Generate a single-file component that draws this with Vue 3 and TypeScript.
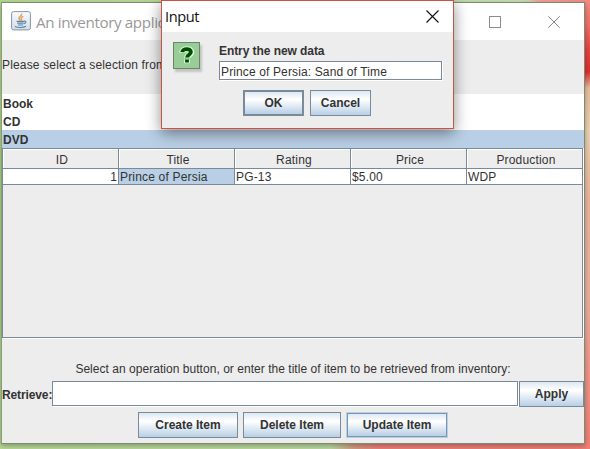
<script setup lang="ts">
import { ref } from 'vue'

interface Item {
  id: number
  title: string
  rating: string
  price: string
  production: string
}

const categories: string[] = ['Book', 'CD', 'DVD']
const selected = ref('DVD')
const columns: string[] = ['ID', 'Title', 'Rating', 'Price', 'Production']
const items = ref<Item[]>([
  { id: 1, title: 'Prince of Persia', rating: 'PG-13', price: '$5.00', production: 'WDP' },
])
const retrieve = ref('')
const entry = ref('Prince of Persia: Sand of Time')
</script>

<template>
  <div class="desktop">
    <main class="window">
      <header class="titlebar">
        <svg class="java" width="20" height="20" viewBox="0 0 20 20">
          <defs>
            <linearGradient id="tile" x1="0" y1="0" x2="0" y2="1">
              <stop offset="0" stop-color="#fafbfc" />
              <stop offset="1" stop-color="#d3dde6" />
            </linearGradient>
          </defs>
          <rect x=".6" y=".6" width="18.8" height="18.3" rx="2" fill="url(#tile)" stroke="#8296a8" />
          <path d="M10.6 2.6c1 2-3.2 3-2.6 4.8.2.9 1.1 1.3 1.2 2.1M12.3 5.4c-2.2 1-2.6 1.8-1.8 2.7.4.5.1 1-.3 1.5" fill="none" stroke="#e59a5c" stroke-width="1.4" />
          <path d="M5.6 10.4h7.6M6.2 12.2h6.4M7 14h5" fill="none" stroke="#5c84a6" stroke-width="1.2" />
          <path d="M13 10.2c2.6-.6 2.6 2-.4 2.8M4 15.5c2.5 1.4 8.8 1.2 11-.3" fill="none" stroke="#5c84a6" stroke-width="1.1" />
        </svg>
        <span class="caption">An inventory applic</span>
        <div class="controls">
          <svg width="12" height="12" viewBox="0 0 12 12"><rect x=".5" y=".5" width="11" height="11" fill="none" stroke="#8c8c8c" /></svg>
          <svg width="12" height="12" viewBox="0 0 12 12"><path d="M.3.3l11.4 11.4M11.7.3L.3 11.7" stroke="#858585" fill="none" /></svg>
        </div>
      </header>
      <section class="prompt"><span>Please select a selection from</span></section>
      <ul class="list">
        <li v-for="c in categories" :key="c" :class="{ active: c === selected }" @click="selected = c">{{ c }}</li>
      </ul>
      <section class="scroll">
        <div class="row head">
          <div v-for="c in columns" :key="c" class="cell">{{ c }}</div>
        </div>
        <div v-for="i in items" :key="i.id" class="row">
          <div class="cell num">{{ i.id }}</div>
          <div class="cell picked">{{ i.title }}</div>
          <div class="cell">{{ i.rating }}</div>
          <div class="cell">{{ i.price }}</div>
          <div class="cell">{{ i.production }}</div>
        </div>
      </section>
      <section class="bottom">
        <p class="hint"><span>Select an operation button, or enter the title of item to be retrieved from inventory:</span></p>
        <div class="retrieve">
          <label for="retrieve">Retrieve:</label>
          <input id="retrieve" v-model="retrieve" class="field" type="text" />
          <button class="btn apply">Apply</button>
        </div>
        <div class="actions">
          <button class="btn create">Create Item</button>
          <button class="btn delete">Delete Item</button>
          <button class="btn update">Update Item</button>
        </div>
      </section>
    </main>

    <div class="dialog" role="dialog">
      <header class="dialog-title">
        <span>Input</span>
        <svg width="13" height="13" viewBox="0 0 13 13"><path d="M.5.5l12 12M12.5.5l-12 12" stroke="#111" stroke-width="1.1" fill="none" /></svg>
      </header>
      <div class="dialog-body">
        <div class="question">
          <svg width="25" height="25" viewBox="0 0 25 25">
            <g fill="none">
              <path d="M8.2 9.8c0-5 9.4-4.6 9.1-.2-.2 2.5-4.2 2.5-4.2 5.2M13 16.6v3.6" stroke="#ceffce" stroke-width="6" />
              <path d="M8.2 9.2c.2-4.3 9-4 8.7 0-.2 2.5-3.9 2.6-3.9 5.2M13 16.6v3" stroke="#064a06" stroke-width="3.8" />
            </g>
          </svg>
        </div>
        <div class="entry">
          <label for="entry">Entry the new data</label>
          <input id="entry" v-model="entry" class="field" type="text" />
        </div>
      </div>
      <div class="dialog-actions">
        <button class="btn ok">OK</button>
        <button class="btn cancel">Cancel</button>
      </div>
    </div>
  </div>
</template>

<style>
body {
  margin: 0;
  overflow: hidden;
}
</style>

<style scoped>
* {
  box-sizing: border-box;
}
.desktop {
  position: relative;
  width: 590px;
  height: 449px;
  padding: 2px 0 0 1px;
  overflow: hidden;
  font: 12px/14px 'Liberation Sans', Arial, sans-serif;
  color: #333;
  background:
    linear-gradient(180deg, #f08c84 0, #ee7168 25px, #e5423d 50px, #dc2f2e 72px, #e5bc9c 88px, #ead0ae 130px, #e9b49a 200px, #e8b09c 300px, #ee9588 370px, #f07e74 449px) right top / 6px 449px no-repeat,
    linear-gradient(90deg, #b9da96 0, #bddba0 330px, #d49a80 355px, #ee8078 380px, #f08075 590px) left bottom / 590px 6px no-repeat,
    linear-gradient(90deg, #b4d690 0, #c4deae 525px, #eea096 540px, #f08c84 590px) left top / 590px 3px no-repeat,
    #b2d591;
}
.window {
  width: 584px;
  height: 442px;
  border: 1px solid #7e8a74;
  border-left-color: #86a072;
  background: #ededed;
  box-shadow: 0 2px 5px rgba(0, 0, 0, 0.3);
}
.titlebar {
  display: flex;
  align-items: center;
  height: 37px;
  padding: 0 24px 0 9px;
  background: #fff;
}
.java {
  margin-top: -1px;
}
.caption {
  margin-left: 5px;
  font: 15.2px/20px 'Open Sans', 'Noto Sans', sans-serif;
  letter-spacing: -0.38px;
  color: #999;
  white-space: nowrap;
}
.controls {
  display: flex;
  gap: 47px;
  margin-left: auto;
}
.controls svg {
  display: block;
}
.prompt {
  height: 54px;
  padding-top: 18px;
}
.prompt span {
  letter-spacing: 0.16px;
}
.list {
  margin: 0;
  padding: 0;
  list-style: none;
  background: #fff;
  font-weight: bold;
}
.list li {
  height: 18px;
  padding: 3px 0 0 1px;
}
.list li.active {
  background: #b8cfe5;
}
.scroll {
  width: 581px;
  height: 190px;
  border: 1px solid #7a8a99;
  box-shadow: 1px 1px 0 #fff;
  letter-spacing: 0.18px;
}
.row {
  display: grid;
  grid-template-columns: repeat(5, 116px);
  width: 579px;
  height: 16px;
  overflow: hidden;
  background: #fff;
}
.row .cell {
  height: 16px;
  padding: 1px 1px 0;
  border-right: 1px solid #7a8a99;
  border-bottom: 1px solid #7a8a99;
  line-height: 14px;
}
.head,
.row.head .cell {
  height: 20px;
}
.row.head .cell {
  padding: 4px 0 0 3px;
  background: #ededed;
  text-align: center;
  box-shadow: inset 1px 1px 0 #fff;
}
.cell.num {
  text-align: right;
}
.row .cell.picked {
  background: #b8cfe5;
}
.bottom {
  padding-top: 24px;
}
.hint {
  margin: 0;
  height: 19px;
  text-align: center;
  letter-spacing: 0.035px;
}
.retrieve {
  display: flex;
  height: 26px;
}
.retrieve label {
  width: 50px;
  padding-top: 7px;
  font-weight: bold;
  letter-spacing: -0.12px;
  white-space: nowrap;
}
.field {
  margin: 0;
  padding: 0 1px;
  border: 1px solid #7a8a99;
  border-radius: 0;
  background: #fff;
  box-shadow: 1px 1px 0 #fff;
  color: #333;
  font: inherit;
  letter-spacing: 0.13px;
  outline: none;
}
.retrieve .field {
  width: 466px;
  height: 25px;
}
.btn {
  height: 26px;
  margin: 0;
  padding: 0;
  border: 1px solid #7a8a99;
  border-radius: 0;
  background: linear-gradient(180deg, #dde8f3 0, #fff 34%, #f4f8fb 45%, #b8cfe5 100%);
  color: #333;
  font: bold 12px/14px 'Liberation Sans', Arial, sans-serif;
  white-space: nowrap;
}
.apply {
  width: 65px;
  margin-left: 1px;
}
.actions {
  display: flex;
  gap: 5px;
  padding: 5px 0 0 136px;
}
.create {
  width: 100px;
}
.delete {
  width: 98px;
}
.update {
  width: 102px;
  border: 2px solid #7a95b2;
  outline: 1px solid #b8cfe5;
  outline-offset: -1px;
}
.dialog {
  position: absolute;
  left: 161px;
  top: 0;
  width: 293px;
  height: 129px;
  border: 1px solid #cb5346;
  background: #ededed;
  box-shadow: 0 4px 14px rgba(0, 0, 0, 0.45);
}
.dialog-title {
  display: flex;
  justify-content: space-between;
  height: 31px;
  padding: 0 14px 0 3px;
  background: #fff;
  color: #111;
  font: 14.6px/31px 'Open Sans', 'Noto Sans', sans-serif;
  letter-spacing: -0.4px;
}
.dialog-title svg {
  margin-top: 9px;
}
.dialog-body {
  display: flex;
  gap: 19px;
  height: 58px;
  padding: 10px 0 0 11px;
}
.question {
  width: 27px;
  height: 27px;
  border: 1px solid #668866;
  background: #99cc99;
  box-shadow: 2px 3px 2px #c4c4c4;
}
.question svg {
  display: block;
}
.entry {
  display: flex;
  flex-direction: column;
  padding-top: 2px;
}
.entry label {
  height: 17px;
  font-weight: bold;
  letter-spacing: -0.07px;
}
.entry .field {
  width: 223px;
  height: 19px;
  padding-top: 2px;
}
.dialog-actions {
  display: flex;
  gap: 6px;
  padding-left: 81px;
}
.ok {
  width: 61px;
  border-width: 2px;
}
.cancel {
  width: 61px;
}
</style>
